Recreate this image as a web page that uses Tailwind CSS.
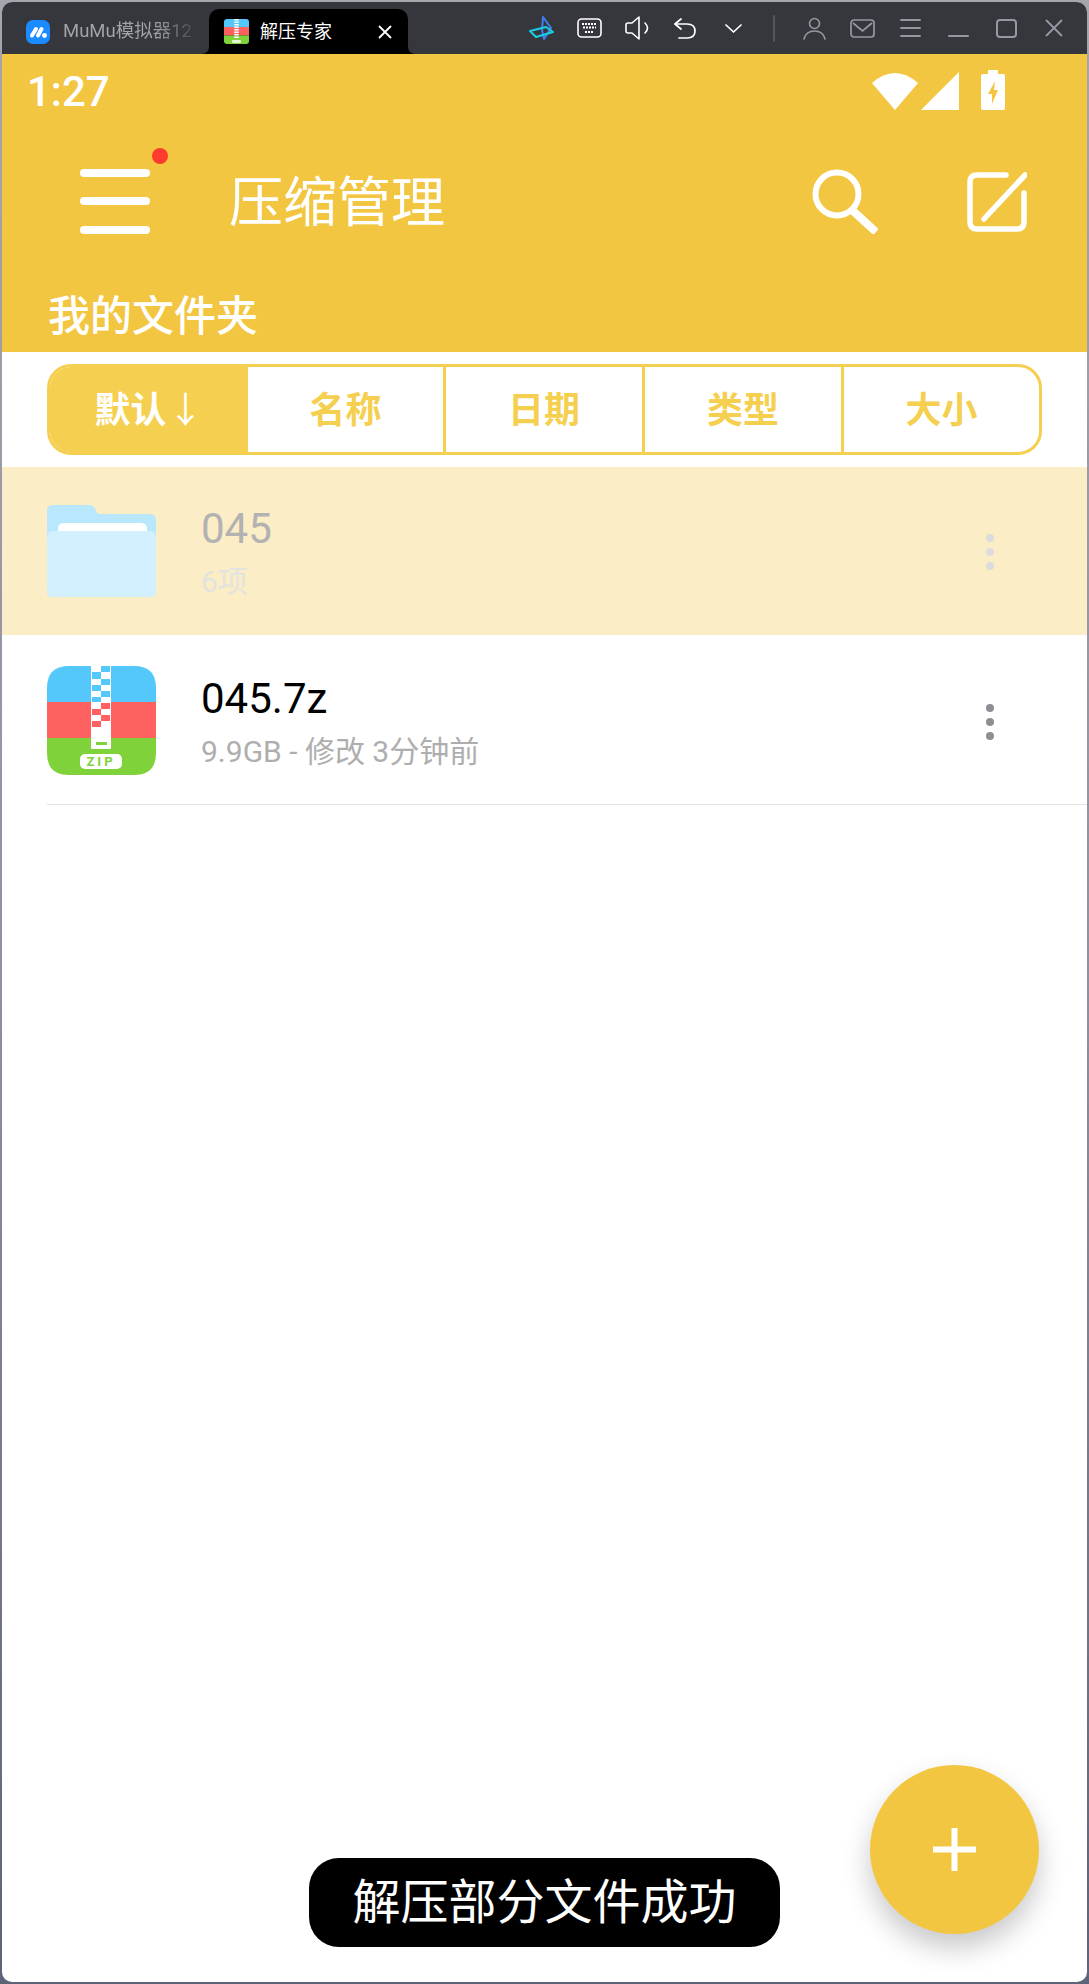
<!DOCTYPE html>
<html lang="zh-CN">
<head>
<meta charset="UTF-8">
<title>解压专家</title>
<script src="https://cdn.jsdelivr.net/npm/@tailwindcss/browser@4"></script>
</head>
<body class="bg-[#8d90a3] font-['Roboto','Noto_Sans_CJK_SC',sans-serif]">
<div class="relative w-[1089px] h-[1984px] overflow-hidden bg-gradient-to-b from-[#a5a6ad] via-[#8f8f9f] to-[#5d6477] pt-[2px] px-[2px]">
  <div class="relative flex flex-col h-[1980px] rounded-[10px] overflow-hidden bg-white">

    <!-- title bar -->
    <div class="flex items-end justify-between h-[52px] bg-[#36373c] shrink-0">
      <div class="flex items-end h-full">
        <div class="flex items-center w-[207px] h-[45px] pl-[24px]">
          <svg class="w-[24px] h-[24px] shrink-0" viewBox="0 0 24 24"><rect width="24" height="24" rx="7" fill="#1a8cff"/><path d="M6 15.500 10 9M12 15.500 15.500 9" stroke="#fff" stroke-width="4" stroke-linecap="round" fill="none"/><circle cx="18.500" cy="15.500" r="2.400" fill="#fff"/></svg>
          <span class="ml-[13px] text-[18.5px] whitespace-nowrap bg-gradient-to-r from-[#a4a5a8] from-70% to-[#4c4d52] bg-clip-text text-transparent">MuMu模拟器12</span>
        </div>
        <div class="relative flex items-center w-[199px] h-[45px] bg-black rounded-t-[10px] pl-[15px]">
          <svg class="absolute -left-[7px] bottom-0 w-[7px] h-[7px]" viewBox="0 0 7 7"><path d="M7 0V7H0A7 7 0 0 0 7 0Z" fill="#000"/></svg>
          <svg class="absolute -right-[7px] bottom-0 w-[7px] h-[7px]" viewBox="0 0 7 7"><path d="M0 0V7H7A7 7 0 0 1 0 0Z" fill="#000"/></svg>
          <svg class="w-[25px] h-[25px] shrink-0" viewBox="0 0 25 25"><path d="M0 8V3Q0 0 3 0H22Q25 0 25 3V8Z" fill="#54c7fb"/><rect y="8" width="25" height="8.500" fill="#ff6060"/><path d="M0 16.500H25V22Q25 25 22 25H3Q0 25 0 22Z" fill="#7fd23a"/><path d="M12.500 0V19" stroke="#fff" stroke-width="4.500" stroke-dasharray="1.500 1"/><rect x="8" y="21" width="9" height="3" rx="1" fill="#fff" opacity=".8"/></svg>
          <span class="ml-[11px] text-[18px] text-white whitespace-nowrap">解压专家</span>
          <svg class="ml-[46px] w-[14px] h-[14px]" viewBox="0 0 14 14"><path d="M1 1 13 13M13 1 1 13" stroke="#fff" stroke-width="1.800" fill="none"/></svg>
        </div>
      </div>

      <div class="flex items-center h-full pr-[9px]">
        <div class="flex items-center justify-center w-[48px]">
          <svg class="w-[25px] h-[24px]" viewBox="0 0 25 24" fill="none" stroke-width="2" stroke-linejoin="round"><path d="M14 1 22 12 15 23 13 14Z" stroke="#3d7ff0"/><path d="M1 15 17 11 24 16 7 21Z" stroke="#19cfe6"/></svg>
        </div>
        <div class="flex items-center justify-center w-[48px]">
          <svg class="w-[25px] h-[20px]" viewBox="0 0 25 20" fill="none"><rect x="1" y="1" width="23" height="18" rx="3.500" stroke="#fff" stroke-width="1.600"/><path d="M5 6H20M6 9.500H19M8 14H17" stroke="#fff" stroke-width="2" stroke-dasharray="2 1"/></svg>
        </div>
        <div class="flex items-center justify-center w-[48px]">
          <svg class="w-[25px] h-[24px]" viewBox="0 0 25 24" fill="none" stroke="#fff" stroke-width="1.600"><path d="M1 9Q1 7 3 7H7L14 1V23L7 17H3Q1 17 1 15Z" stroke-linejoin="round"/><path d="M20 7Q25 12 20 17" stroke-linecap="round"/></svg>
        </div>
        <div class="flex items-center justify-center w-[48px]">
          <svg class="w-[22px] h-[21px]" viewBox="0 0 22 21" fill="none" stroke="#fff" stroke-width="1.700" stroke-linecap="round" stroke-linejoin="round"><path d="M7 1 1 6 7 11"/><path d="M1 6H13Q21 6 21 13T13 20H5"/></svg>
        </div>
        <div class="flex items-center justify-center w-[48px]">
          <svg class="w-[17px] h-[9px]" viewBox="0 0 17 9" fill="none"><path d="M1 1 8.500 8 16 1" stroke="#fff" stroke-width="1.700" stroke-linecap="round" stroke-linejoin="round"/></svg>
        </div>
        <div class="flex items-center justify-center w-[33px]">
          <div class="w-[2px] h-[27px] bg-[#55565c] rounded-full"></div>
        </div>
        <div class="flex items-center justify-center w-[48px]">
          <svg class="w-[23px] h-[23px]" viewBox="0 0 23 23" fill="none" stroke="#9499a3" stroke-width="1.600" stroke-linecap="round"><circle cx="11.500" cy="6.500" r="5"/><path d="M1 22Q3 14 11.500 14T22 22"/></svg>
        </div>
        <div class="flex items-center justify-center w-[48px]">
          <svg class="w-[25px] h-[19px]" viewBox="0 0 25 19" fill="none" stroke="#9499a3" stroke-width="1.700"><rect x="1" y="1" width="23" height="17" rx="3"/><path d="M3 4 12.500 12 22 4"/></svg>
        </div>
        <div class="flex items-center justify-center w-[48px]">
          <svg class="w-[21px] h-[18px]" viewBox="0 0 21 18" fill="none" stroke="#9499a3" stroke-width="1.800" stroke-linecap="round"><path d="M1 1H20M1 9H20M1 17H20"/></svg>
        </div>
        <div class="flex items-end justify-center w-[48px] h-[18px]">
          <div class="w-[21px] h-[2px] bg-[#9499a3] rounded-full"></div>
        </div>
        <div class="flex items-center justify-center w-[48px]">
          <div class="w-[21px] h-[19px] border-2 border-[#9499a3] rounded-[4px]"></div>
        </div>
        <div class="flex items-center justify-center w-[48px]">
          <svg class="w-[18px] h-[18px]" viewBox="0 0 18 18" fill="none" stroke="#9499a3" stroke-width="1.800"><path d="M1 1 17 17M17 1 1 17"/></svg>
        </div>
      </div>
    </div>

    <!-- yellow header -->
    <div class="h-[298px] bg-[#f3c642] shrink-0 flex flex-col text-white">
      <div class="flex items-center justify-between h-[74px] pl-[25px] pr-[82px]">
        <span class="pt-[2px] text-[42px] leading-none font-medium">1:27</span>
        <div class="flex items-end gap-[3px] pb-[3px]">
          <svg class="w-[46px] h-[39px]" viewBox="0 0 46 39"><path d="M0 12Q23 -8 46 12L23 39Z" fill="#fff"/></svg>
          <svg class="w-[38px] h-[38px]" viewBox="0 0 38 38"><path d="M38 0V38H0Z" fill="#fff"/></svg>
          <svg class="ml-[19px] w-[24px] h-[40px]" viewBox="0 0 24 40"><path d="M7 0H17V4H22Q24 4 24 6V38Q24 40 22 40H2Q0 40 0 38V6Q0 4 2 4H7Z" fill="#fff"/><path d="M14 11 7 24H11V34L17 20H13Z" fill="#f3c642"/></svg>
        </div>
      </div>
      <div class="flex items-center h-[146px] pl-[78px] pr-[60px]">
        <div class="relative w-[70px] h-[65px] flex flex-col justify-between">
          <div class="h-[8px] bg-white rounded-full"></div>
          <div class="h-[8px] bg-white rounded-full"></div>
          <div class="h-[8px] bg-white rounded-full"></div>
          <div class="absolute -top-[21px] -right-[18px] w-[16px] h-[16px] rounded-full bg-[#ff3b30]"></div>
        </div>
        <h1 class="ml-[79px] pt-[6px] text-[54px] leading-none font-normal">压缩管理</h1>
        <svg class="ml-auto w-[66px] h-[65px]" viewBox="0 0 66 65" fill="none" stroke="#fff"><circle cx="25" cy="25" r="21.500" stroke-width="6"/><path d="M40 41 64 63" stroke-width="8"/></svg>
        <svg class="ml-[89px] mt-[2px] w-[60px] h-[60px]" viewBox="0 0 60 60" fill="none" stroke="#fff" stroke-width="5.500" stroke-linecap="round"><path d="M39 3H10Q3 3 3 10V50Q3 57 10 57H50Q57 57 57 50V21"/><path d="M58 3 17 47"/></svg>
      </div>
      <h2 class="pl-[46px] pt-[15px] text-[42px] leading-[56px] font-medium">我的文件夹</h2>
    </div>

    <!-- sort tabs -->
    <div class="px-[45px] pt-[12px] pb-[12px] shrink-0">
      <div class="flex h-[91px] w-[995px] border-[3px] border-[#f5d050] rounded-[24px] overflow-hidden text-[36px] font-bold text-[#f5d050] leading-none">
        <div class="w-[198px] pt-[3px] flex items-center justify-center bg-[#f5d050] text-white">默认<span class="ml-[1px] text-[36px] font-normal">↓</span></div>
        <div class="w-[195px] pt-[3px] flex items-center justify-center">名称</div>
        <div class="w-[199px] pt-[3px] flex items-center justify-center border-l-[3px] border-[#f5d050]">日期</div>
        <div class="w-[199px] pt-[3px] flex items-center justify-center border-l-[3px] border-[#f5d050]">类型</div>
        <div class="flex-1 pt-[3px] flex items-center justify-center border-l-[3px] border-[#f5d050]">大小</div>
      </div>
    </div>

    <!-- file list -->
    <div class="flex items-center h-[168px] bg-[#fbedc5] pl-[45px] pr-[93px] shrink-0">
      <svg class="w-[109px] h-[92px] shrink-0" viewBox="0 0 109 92"><path d="M0 6Q0 0 6 0H42Q47 0 49 6L51 9H103Q109 9 109 15V86Q109 92 103 92H6Q0 92 0 86Z" fill="#b9e8fe"/><path d="M11 24Q11 18 17 18H94Q100 18 100 24V30H11Z" fill="#fff"/><path d="M0 33Q0 26 7 26H102Q109 26 109 33V86Q109 92 103 92H6Q0 92 0 86Z" fill="#d2f0fe"/></svg>
      <div class="ml-[45px] pt-[4px] flex flex-col">
        <span class="text-[42px] leading-[50px] text-[#b2b2b2]">045</span>
        <span class="mt-[8px] text-[30px] leading-[40px] text-[#e3e3df]">6项</span>
      </div>
      <div class="ml-auto pt-[2px] flex flex-col gap-[6px]">
        <div class="w-[8px] h-[8px] rounded-full bg-[#dcdcdc]"></div>
        <div class="w-[8px] h-[8px] rounded-full bg-[#dcdcdc]"></div>
        <div class="w-[8px] h-[8px] rounded-full bg-[#dcdcdc]"></div>
      </div>
    </div>
    <div class="flex items-center h-[170px] ml-[45px] pt-[2px] pr-[93px] border-b border-[#e2e2e2] shrink-0">
      <svg class="w-[109px] h-[109px] shrink-0" viewBox="0 0 109 109">
        <path d="M0 36V22Q0 0 22 0H87Q109 0 109 22V36Z" fill="#54c7fb"/>
        <rect y="36" width="109" height="36" fill="#ff6060"/>
        <path d="M0 72H109V87Q109 109 87 109H22Q0 109 0 87Z" fill="#7fd23a"/>
        <path d="M44 0H64V60Q64 62 64 70V82Q64 83 63 83H45Q44 83 44 82Z" fill="#fff"/>
        <path d="M54 0H63V6H54ZM45 6H54V13H45ZM54 13H63V19H54ZM45 19H54V25H45ZM54 25H63V31H54ZM45 31H54V36H45Z" fill="#54c7fb"/>
        <path d="M54 37H63V43H54ZM45 43H54V49H45ZM54 49H63V55H54ZM45 55H54V61H45Z" fill="#ff6060"/>
        <rect x="49" y="76" width="11" height="3" fill="#7fd23a"/>
        <rect x="33" y="88" width="42" height="15" rx="5" fill="#fff"/>
        <text x="54" y="100" text-anchor="middle" font-size="13" font-weight="700" letter-spacing="3" fill="#7fd23a" font-family="Roboto">ZIP</text>
      </svg>
      <div class="ml-[45px] pt-[4px] flex flex-col">
        <span class="text-[42px] leading-[50px] text-black">045.7z</span>
        <span class="mt-[8px] text-[30px] leading-[40px] text-[#aeaeae]">9.9GB - 修改 3分钟前</span>
      </div>
      <div class="ml-auto pt-[2px] flex flex-col gap-[6px]">
        <div class="w-[8px] h-[8px] rounded-full bg-[#8e8e93]"></div>
        <div class="w-[8px] h-[8px] rounded-full bg-[#8e8e93]"></div>
        <div class="w-[8px] h-[8px] rounded-full bg-[#8e8e93]"></div>
      </div>
    </div>

    <!-- toast -->
    <div class="absolute left-[307px] top-[1856px] w-[471px] h-[89px] rounded-[30px] bg-black text-white text-[48px] leading-none flex items-center justify-center">解压部分文件成功</div>

    <!-- fab -->
    <div class="absolute left-[868px] top-[1763px] w-[169px] h-[169px] rounded-full bg-[#f3c642] shadow-[0_14px_28px_rgba(0,0,0,0.22)] flex items-center justify-center">
      <svg class="w-[43px] h-[43px]" viewBox="0 0 43 43"><path d="M18.500 0H24.500V18.500H43V24.500H24.500V43H18.500V24.500H0V18.500H18.500Z" fill="#fff"/></svg>
    </div>
  </div>
</div>
</body>
</html>
